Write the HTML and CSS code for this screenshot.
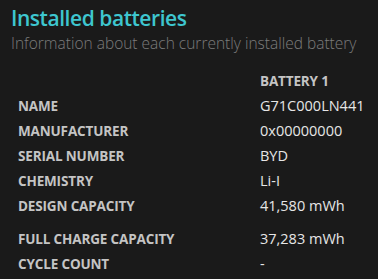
FILE: index.html
```html
<!DOCTYPE html>
<html>
<head>
<meta charset="utf-8">
<link rel="stylesheet" href="styles.css">
</head>
<body>
<div class="page">
  <h1 class="title">Installed batteries</h1>
  <p class="subtitle">Information about each currently installed battery</p>
  <div class="table">
    <div class="row head"><span class="label"></span><span class="colhead">BATTERY 1</span></div>
    <div class="row"><span class="label">NAME</span><span class="value">G71C000LN441</span></div>
    <div class="row"><span class="label">MANUFACTURER</span><span class="value">0x00000000</span></div>
    <div class="row"><span class="label">SERIAL NUMBER</span><span class="value">BYD</span></div>
    <div class="row"><span class="label">CHEMISTRY</span><span class="value">Li-I</span></div>
    <div class="row"><span class="label">DESIGN CAPACITY</span><span class="value">41,580 mWh</span></div>
    <div class="row gap"><span class="label">FULL CHARGE CAPACITY</span><span class="value">37,283 mWh</span></div>
    <div class="row"><span class="label">CYCLE COUNT</span><span class="value">-</span></div>
  </div>
</div>
</body>
</html>
```
FILE: styles.css
```css
html, body {
  margin: 0;
  padding: 0;
  background: #1a1a1a;
}
.page {
  width: 378px;
  height: 279px;
  overflow: hidden;
  padding: 4px 0 0 11px;
  box-sizing: border-box;
  font-family: "Open Sans", "Noto Sans", sans-serif;
}
.title {
  margin: 0;
  font-size: 21px;
  font-weight: 600;
  color: #3ec6cf;
  line-height: 29px;
  letter-spacing: -0.45px;
}
.subtitle {
  margin: 0;
  font-size: 15.5px;
  font-weight: 300;
  color: #7c7c7c;
  line-height: 21px;
  letter-spacing: 0;
}
.table {
  margin-top: 14px;
  padding-left: 7px;
}
.row {
  display: grid;
  grid-template-columns: 242px 1fr;
  height: 25px;
  align-items: center;
}
.row.gap {
  margin-top: 8px;
}
.label, .colhead {
  font-size: 13.5px;
  font-weight: 700;
  color: #c4c4c4;
  letter-spacing: -0.15px;
}
.value {
  font-size: 14.5px;
  color: #e6e6e6;
  letter-spacing: 0;
}
```
